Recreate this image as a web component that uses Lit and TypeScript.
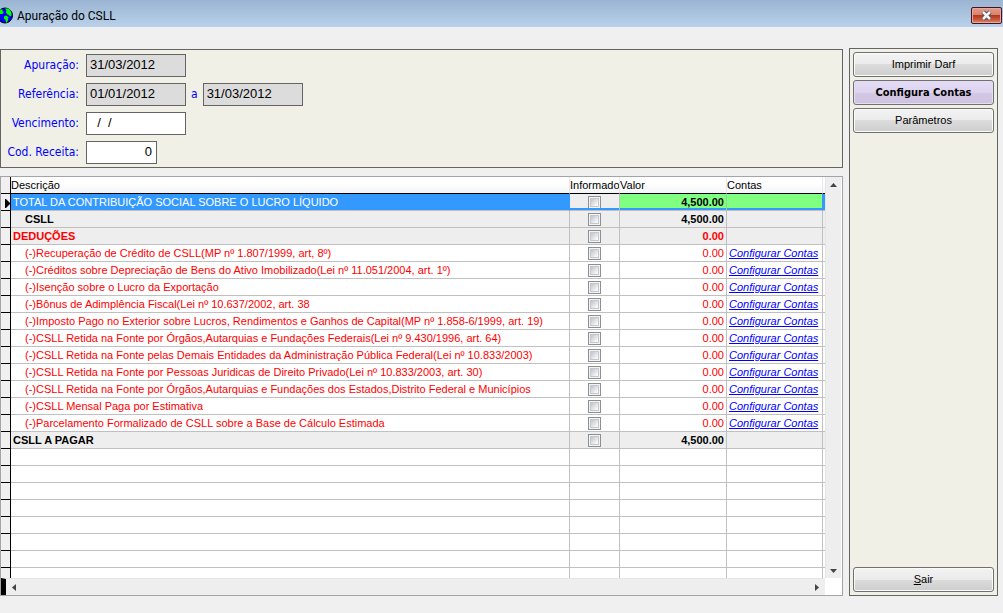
import { LitElement, html, css, svg } from "lit";
import { customElement } from "lit/decorators.js";

type Kind = "selected" | "total" | "group" | "item";

interface Row {
  text: string;
  value: string;
  kind: Kind;
  indent?: boolean;
}

const deductions = [
  "(-)Recuperação de Crédito de CSLL(MP nº 1.807/1999, art, 8º)",
  "(-)Créditos sobre Depreciação de Bens do Ativo Imobilizado(Lei nº 11.051/2004, art. 1º)",
  "(-)Isenção sobre o Lucro da Exportação",
  "(-)Bônus de Adimplência Fiscal(Lei nº 10.637/2002, art. 38",
  "(-)Imposto Pago no Exterior sobre Lucros, Rendimentos e Ganhos de Capital(MP nº 1.858-6/1999, art. 19)",
  "(-)CSLL Retida na Fonte por Órgãos,Autarquias e Fundações Federais(Lei nº 9.430/1996, art. 64)",
  "(-)CSLL Retida na Fonte pelas Demais Entidades da Administração Pública Federal(Lei nº 10.833/2003)",
  "(-)CSLL Retida na Fonte por Pessoas Juridicas de Direito Privado(Lei nº 10.833/2003, art. 30)",
  "(-)CSLL Retida na Fonte por Órgãos,Autarquias e Fundações dos Estados,Distrito Federal e Municípios",
  "(-)CSLL Mensal Paga por Estimativa",
  "(-)Parcelamento Formalizado de CSLL sobre a Base de Cálculo Estimada",
];

const rows: Row[] = [
  { text: "TOTAL DA CONTRIBUIÇÃO SOCIAL SOBRE O LUCRO LÍQUIDO", value: "4,500.00", kind: "selected" },
  { text: "CSLL", value: "4,500.00", kind: "total", indent: true },
  { text: "DEDUÇÕES", value: "0.00", kind: "group" },
  ...deductions.map((text): Row => ({ text, value: "0.00", kind: "item", indent: true })),
  { text: "CSLL A PAGAR", value: "4,500.00", kind: "total" },
];

const fillerRows = Array.from({ length: 8 });

@customElement("title-bar")
export class TitleBar extends LitElement {
  static styles = css`
    :host {
      display: flex;
      align-items: center;
      height: 27px;
      padding: 4px 1px 0 0;
      box-sizing: border-box;
      overflow: hidden;
      background: linear-gradient(#9ab4d2, #b9d1ea);
      font: 12px/16px Roboto, "Open Sans", sans-serif;
      color: #000;
    }
    .globe { width: 14px; height: 17px; flex: none; }
    .title { flex: 1; margin: 0 0 0 3px; font: inherit; }
    .close {
      width: 31px;
      height: 17px;
      padding: 0;
      box-sizing: border-box;
      display: flex;
      align-items: center;
      justify-content: center;
      border: 1px solid #43141c;
      border-radius: 2px;
      box-shadow: inset 0 0 0 1px #e6a99f;
      background: linear-gradient(#e39c8e 0, #d5836f 45%, #b8371c 50%, #c8553a 75%, #d98a70 100%);
    }
  `;

  render() {
    return html`
      <svg class="globe" viewBox="0 0 14 17" aria-hidden="true">
        <circle cx="5" cy="8.5" r="7.5" fill="#0000f4" stroke="#000" />
        <path fill="#0f0" d="M0 2.500h2.500v2h1v1.500l-1.500 1H0zM5 1.500h3.500l2 2 1 3v2l-1.500 1-1-1.500-1.500-.5-1.500-2 .5-2zM4 9.500l2-1 2.500 1.500-.5 3-1 2.500H6l-.5-2.500L4 11.500z" />
      </svg>
      <h1 class="title">Apuração do CSLL</h1>
      <button class="close" aria-label="Fechar">
        <svg width="13" height="11" viewBox="0 0 13 11" aria-hidden="true">
          <path d="M3 2l7 7M10 2l-7 7" stroke="#4b4f5c" stroke-width="4.500" />
          <path d="M3 2l7 7M10 2l-7 7" stroke="#f4f4f4" stroke-width="2.500" />
        </svg>
      </button>
    `;
  }
}

@customElement("period-form")
export class PeriodForm extends LitElement {
  static styles = css`
    :host {
      display: block;
      padding: 4px 6px 3px;
      border: 1px solid #646464;
      background: #f0f0e6;
      font: 12px/17px "DejaVu Sans Condensed", "DejaVu Sans", sans-serif;
      color: #00f;
    }
    .fields {
      display: grid;
      grid-template-columns: 72px 1fr;
      gap: 6px 7px;
      align-items: center;
    }
    .label { justify-self: end; white-space: nowrap; }
    .range { display: flex; align-items: center; gap: 5px; }
    .field {
      width: 100px;
      height: 23px;
      box-sizing: border-box;
      margin: 0;
      padding: 0 4px 2px 3px;
      border: 1px solid #646464;
      border-radius: 0;
      background: #fff;
      color: #000;
      font: 13px/18px "Liberation Sans", Arial, sans-serif;
      white-space: pre;
    }
    .field:read-only { background: #dcdcdc; }
    .code { width: 71px; text-align: right; }
  `;

  render() {
    return html`
      <form class="fields">
        <label class="label" for="apuracao">Apuração:</label>
        <div class="range"><input class="field" id="apuracao" readonly value="31/03/2012" /></div>
        <label class="label" for="inicio">Referência:</label>
        <div class="range">
          <input class="field" id="inicio" readonly value="01/01/2012" />
          <label for="fim">a</label>
          <input class="field" id="fim" readonly value="31/03/2012" />
        </div>
        <label class="label" for="vencimento">Vencimento:</label>
        <div class="range"><input class="field" id="vencimento" value="  /  /" /></div>
        <label class="label" for="receita">Cod. Receita:</label>
        <div class="range"><input class="field code" id="receita" value="0" /></div>
      </form>
    `;
  }
}

@customElement("accounts-grid")
export class AccountsGrid extends LitElement {
  static styles = css`
    :host {
      display: grid;
      grid-template: minmax(0, 1fr) 17px / minmax(0, 1fr) 17px;
      border: 1px solid #a3a3a9;
      background: #fff;
      font: 11px/16px "Liberation Sans", Arial, sans-serif;
      color: #000;
    }
    .viewport { overflow: hidden; }
    .table {
      width: 100%;
      table-layout: fixed;
      border-collapse: separate;
      border-spacing: 0;
    }
    .c-mark { width: 10px; }
    .c-check { width: 50px; }
    .c-value { width: 107px; }
    .c-link { width: 96px; }
    .c-end { width: 2px; }
    th, td {
      box-sizing: border-box;
      height: 17px;
      padding: 0;
      border-right: 1px solid #c0c0c0;
      border-bottom: 1px solid #c0c0c0;
      text-align: left;
      white-space: nowrap;
      overflow: hidden;
    }
    th {
      font-weight: 400;
      border-right-color: #e8e8ea;
      border-bottom-color: #000;
      background: linear-gradient(#fff 40%, #f3f4f6);
    }
    td:nth-child(2) { padding-left: 2px; }
    .mark { border-right-color: #000; border-bottom-color: #000; background: #f0f0f0; }
    .end { border-right: 0; }
    .arrow { display: block; margin: 2px 0 0 4px; }
    .check { text-align: center; }
    .box {
      appearance: none;
      display: block;
      width: 13px;
      height: 13px;
      box-sizing: border-box;
      margin: 2px auto 1px;
      border: 1px solid #8e8f8f;
      box-shadow: inset 0 0 0 1px #f4f4f4, inset 0 0 0 2px #c4c8ce;
      background: linear-gradient(135deg, #c6cad1 25%, #fafafa 75%);
    }
    .selected .box { height: 12px; margin-bottom: 2px; border-bottom: 0; }
    .value { text-align: right; padding-right: 2px; }
    .link { padding-left: 2px; }
    .link a { color: #00f; font-style: italic; text-decoration: underline; }
    tr td.indent { padding-left: 14px; }
    .item { color: #f00; }
    .total, .group { font-weight: 700; }
    .group { color: #f00; }
    .total td, .group td, .selected .check { background: #eee; }
    .total .mark, .group .mark { background: #f0f0f0; }
    .selected td:not(.mark) { box-shadow: inset 0 -2px #39f; }
    .selected .text { background: #39f; border-right-color: #39f; color: #fff; }
    .selected .value, .selected .link { background: #80ff80; }
    .selected .value { font-weight: 700; border-right-color: #8fd68f; }
    .selected .link { border-right-color: #39f; }
    .selected .end { background: #39f; }
    .bar { display: flex; justify-content: space-between; align-items: center; background: #eee; }
    .vbar { flex-direction: column; padding: 6px 0 5px; border-left: 1px solid #e6e6e6; border-right: 1px solid #fff; }
    .hbar { padding: 0 6px; border-top: 1px solid #e6e6e6; border-left: 5px solid #000; }
  `;

  private arrow(points: string, w: number, h: number) {
    return html`<svg width=${w} height=${h} viewBox="0 0 ${w} ${h}" aria-hidden="true">
      ${svg`<polygon points=${points} fill="#444" />`}
    </svg>`;
  }

  private row(r: Row) {
    return html`
      <tr class=${r.kind}>
        <td class="mark">
          ${r.kind === "selected"
            ? html`<svg class="arrow" width="5" height="9" viewBox="0 0 5 9" aria-hidden="true">
                <path d="M0 0h1l4 4v1L1 9H0z" />
              </svg>`
            : ""}
        </td>
        <td class="text ${r.indent ? "indent" : ""}">${r.text}</td>
        <td class="check"><input class="box" type="checkbox" aria-label=${`Informado: ${r.text}`} /></td>
        <td class="value">${r.value}</td>
        <td class="link">${r.kind === "item" ? html`<a href="#contas">Configurar Contas</a>` : ""}</td>
        <td class="end"></td>
      </tr>
    `;
  }

  render() {
    return html`
      <div class="viewport">
        <table class="table">
          <colgroup>
            <col class="c-mark" /><col /><col class="c-check" /><col class="c-value" /><col class="c-link" /><col class="c-end" />
          </colgroup>
          <thead>
            <tr>
              <th class="mark"></th>
              <th>Descrição</th>
              <th>Informado</th>
              <th>Valor</th>
              <th>Contas</th>
              <th class="end"></th>
            </tr>
          </thead>
          <tbody>
            ${rows.map((r) => this.row(r))}
            ${fillerRows.map(() => html`<tr><td class="mark"></td><td></td><td></td><td></td><td></td><td class="end"></td></tr>`)}
          </tbody>
        </table>
      </div>
      <div class="bar vbar">
        ${this.arrow("0,4 3.5,0 7,4", 7, 4)} ${this.arrow("0,0 7,0 3.5,4", 7, 4)}
      </div>
      <div class="bar hbar">
        ${this.arrow("4,0 4,7 0,3.5", 4, 7)} ${this.arrow("0,0 4,3.5 0,7", 4, 7)}
      </div>
    `;
  }
}

@customElement("action-panel")
export class ActionPanel extends LitElement {
  static styles = css`
    :host {
      display: flex;
      flex-direction: column;
      gap: 3px;
      padding: 3px;
      border: 1px solid #646464;
      background: #f0f0e6;
    }
    .action {
      height: 25px;
      padding: 0 0 2px;
      border: 1px solid #707070;
      border-radius: 3px;
      box-shadow: inset 0 0 0 1px #fafafa;
      background: linear-gradient(#f3f3f3, #ebebeb 50%, #dcdcdc 50%, #cdcdcd);
      color: #000;
      font: 11px/16px "Liberation Sans", Arial, sans-serif;
    }
    .current {
      padding: 0;
      box-shadow: inset 0 0 0 1px #e6def5;
      background: linear-gradient(#e4dcf5, #ddd3f0 50%, #d3c9e4 50%, #cdc2e0);
      font: 700 11px/16px "DejaVu Sans Condensed", "DejaVu Sans", sans-serif;
    }
    .exit { margin-top: auto; }
  `;

  render() {
    return html`
      <button class="action">Imprimir Darf</button>
      <button class="action current">Configura Contas</button>
      <button class="action">Parâmetros</button>
      <button class="action exit"><u>S</u>air</button>
    `;
  }
}

@customElement("app-root")
export class AppRoot extends LitElement {
  static styles = css`
    :host {
      display: flex;
      flex-direction: column;
      height: 100vh;
      background: #f0f0f0;
    }
    .content {
      flex: 1;
      min-height: 0;
      display: grid;
      grid-template-columns: minmax(0, 1fr) 149px;
      gap: 6px;
      padding: 21px 5px 17px 0;
    }
    .main {
      min-height: 0;
      display: flex;
      flex-direction: column;
      gap: 8px;
      padding-top: 1px;
    }
    .grid { flex: 1; min-height: 0; }
  `;

  render() {
    return html`
      <title-bar></title-bar>
      <main class="content">
        <div class="main">
          <period-form></period-form>
          <accounts-grid class="grid"></accounts-grid>
        </div>
        <action-panel></action-panel>
      </main>
    `;
  }
}
